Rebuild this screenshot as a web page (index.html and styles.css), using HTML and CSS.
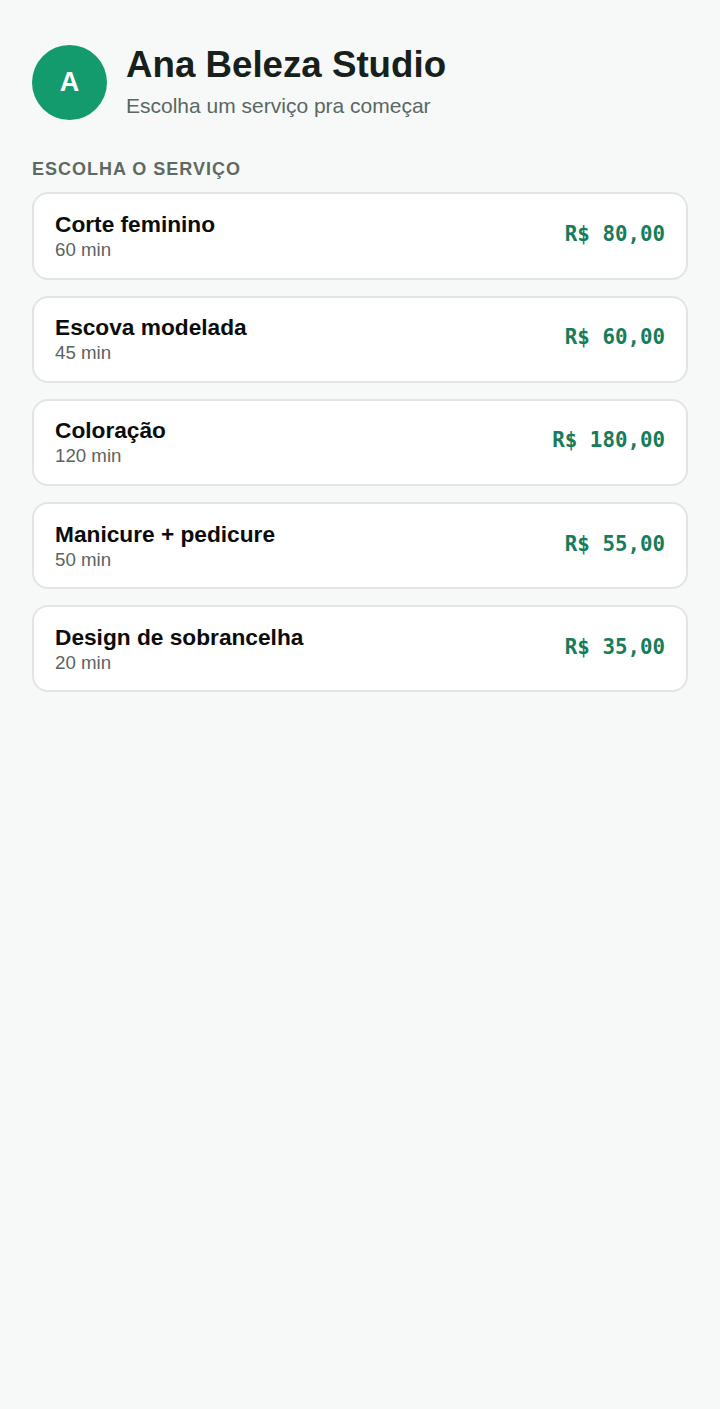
FILE: index.html
```html
<!DOCTYPE html>
<html lang="pt-BR">
<head>
    <meta charset="UTF-8">
    <meta name="viewport" content="width=device-width, initial-scale=1.0">
    <title>Ana Beleza Studio</title>
    <link rel="stylesheet" href="styles.css">
</head>
<body>
    <div class="page">
        <!-- Cabeçalho do estúdio -->
        <header class="studio">
            <div class="avatar">A</div>
            <div class="studio-info">
                <h1>Ana Beleza Studio</h1>
                <p class="subtitle">Escolha um serviço pra começar</p>
            </div>
        </header>

        <!-- Lista de serviços -->
        <h3 class="section-label">Escolha o serviço</h3>
        <div class="services">
            <div class="service">
                <div>
                    <div class="name">Corte feminino</div>
                    <div class="duration">60 min</div>
                </div>
                <div class="price">R$ 80,00</div>
            </div>
            <div class="service">
                <div>
                    <div class="name">Escova modelada</div>
                    <div class="duration">45 min</div>
                </div>
                <div class="price">R$ 60,00</div>
            </div>
            <div class="service">
                <div>
                    <div class="name">Coloração</div>
                    <div class="duration">120 min</div>
                </div>
                <div class="price">R$ 180,00</div>
            </div>
            <div class="service">
                <div>
                    <div class="name">Manicure + pedicure</div>
                    <div class="duration">50 min</div>
                </div>
                <div class="price">R$ 55,00</div>
            </div>
            <div class="service">
                <div>
                    <div class="name">Design de sobrancelha</div>
                    <div class="duration">20 min</div>
                </div>
                <div class="price">R$ 35,00</div>
            </div>
        </div>
    </div>
</body>
</html>
```

FILE: styles.css
```css
body {
    font-family: 'Liberation Sans', Arial, sans-serif;
    margin: 0;
    background: #f7f9f8;
    min-height: 100vh;
}
.page {
    padding: 45px 32px 32px;
}
.studio {
    display: flex;
    align-items: center;
    gap: 19px;
}
.avatar {
    width: 75px;
    height: 75px;
    border-radius: 50%;
    background: #139a6d;
    color: #fff;
    font-weight: bold;
    font-size: 27px;
    display: flex;
    align-items: center;
    justify-content: center;
    flex-shrink: 0;
}
h1 {
    margin: 0;
    font-size: 36.7px;
    line-height: 1.1;
    color: #17211c;
}
.subtitle {
    margin: 9px 0 2px;
    font-size: 21px;
    color: #5a6762;
}
.section-label {
    margin: 39px 0 12px;
    font-size: 18px;
    text-transform: uppercase;
    letter-spacing: 1px;
    color: #5d6a63;
}
.services {
    display: flex;
    flex-direction: column;
    gap: 16px;
}
.service {
    display: flex;
    align-items: center;
    justify-content: space-between;
    background: #fff;
    border: 2px solid #e1e6e3;
    border-radius: 16px;
    padding: 16.6px 21px;
}
.name {
    font-size: 22.7px;
    font-weight: bold;
    color: #0b0d0c;
}
.duration {
    margin-top: 1px;
    font-size: 18.7px;
    color: #5b6360;
}
.price {
    margin-bottom: 4px;
    font-family: 'DejaVu Sans Mono', monospace;
    font-weight: bold;
    font-size: 20.8px;
    color: #167c5a;
}
```
